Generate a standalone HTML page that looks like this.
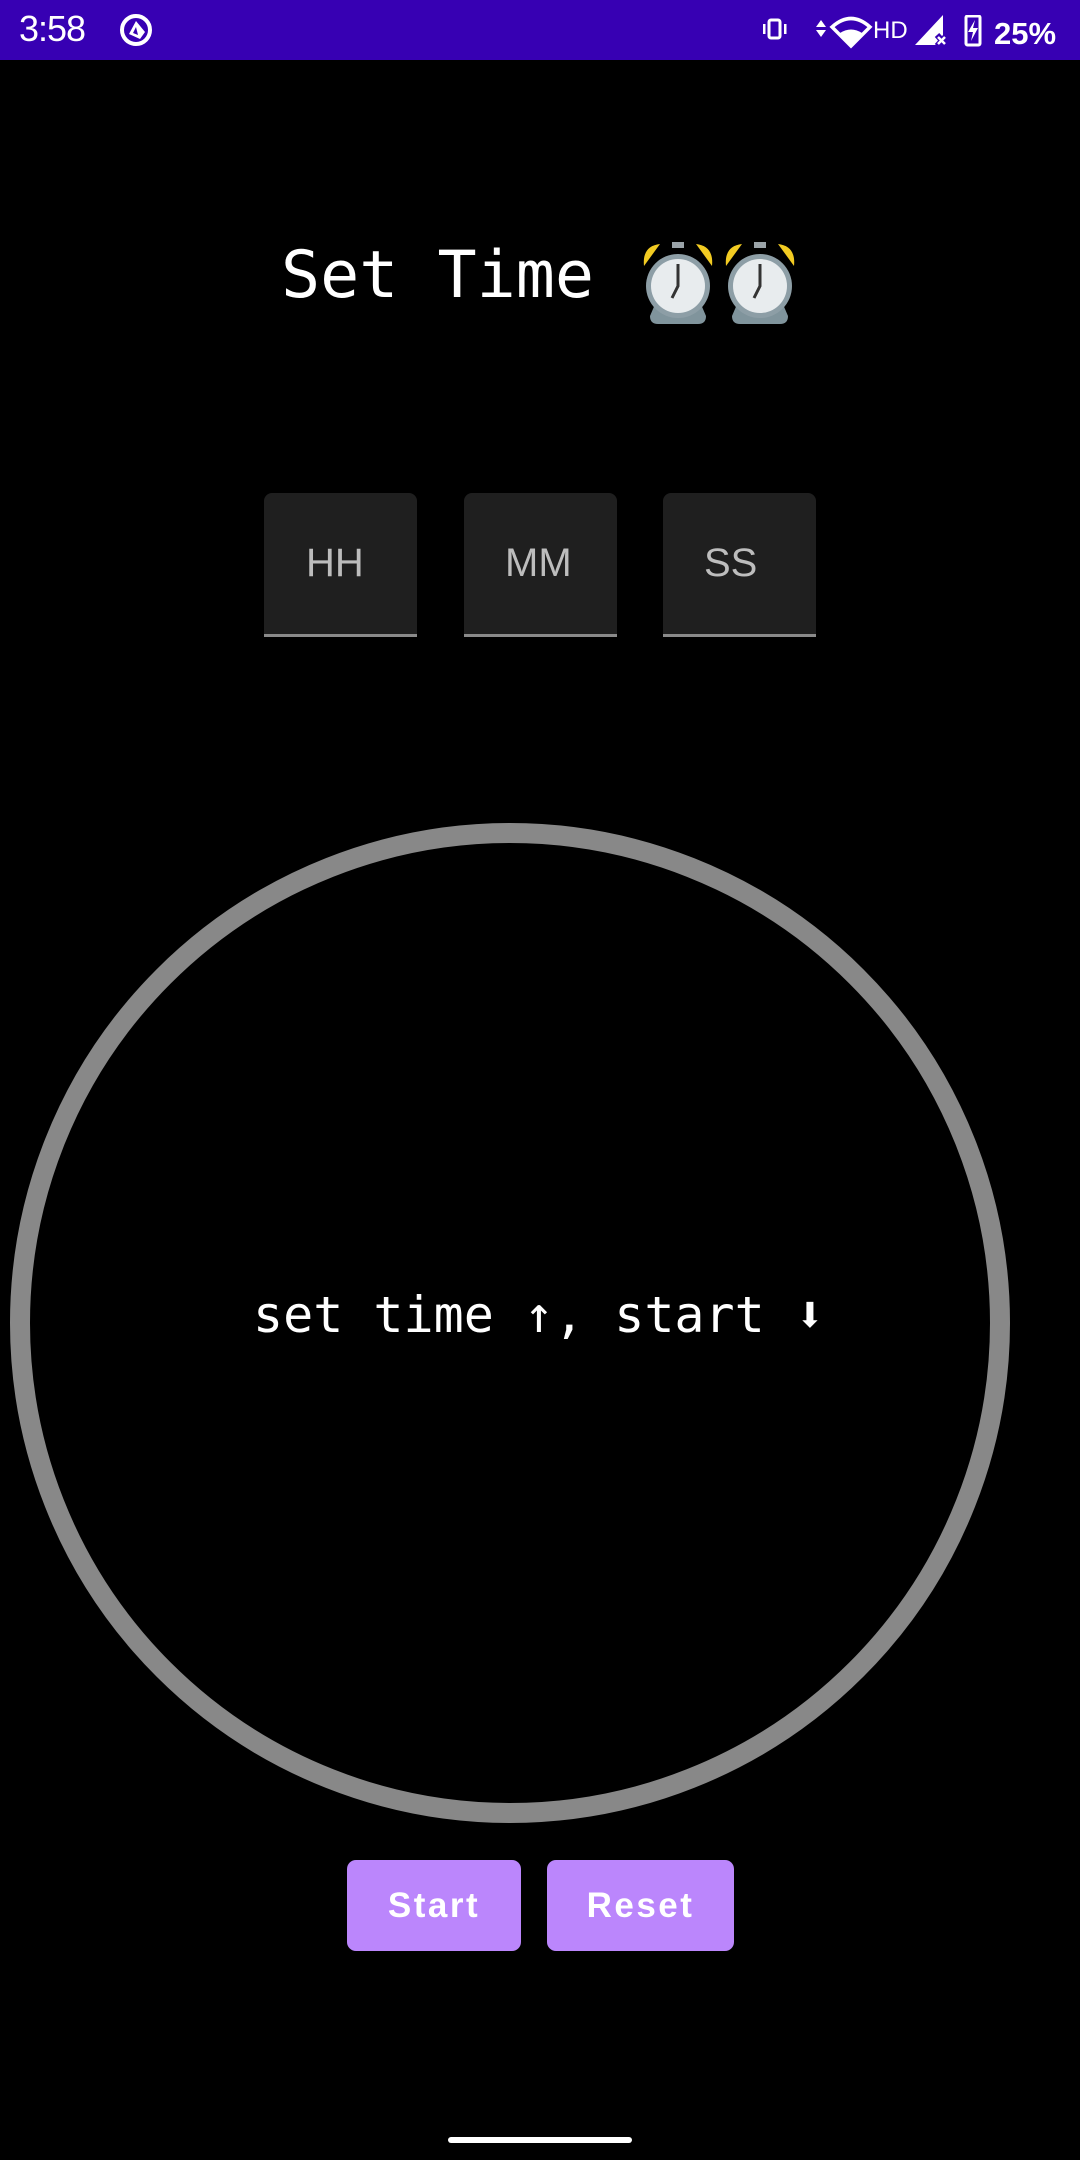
<!DOCTYPE html>
<html><head><meta charset="utf-8"><style>
html,body{margin:0;padding:0;background:#000;width:1080px;height:2160px;overflow:hidden;position:relative;font-family:"Liberation Sans",sans-serif}
.sb{position:absolute;left:0;top:0;width:1080px;height:60px;background:#3700b3;color:#fff}
.abs{position:absolute}
.box{position:absolute;top:493px;width:153px;height:141px;background:#1f1f1f;border-radius:8px 8px 0 0;border-bottom:3px solid #8a8a8a;color:#bdbdbd;font-size:40px;line-height:141px}
.btn{position:absolute;top:1860px;height:91px;background:#bb86fc;border-radius:9px;color:#fff;font-weight:bold;font-size:35px;letter-spacing:2.5px;text-align:center;line-height:91px}
</style></head><body>
<div class="sb">
 <div class="abs" style="left:19px;top:8px;font-size:36px;letter-spacing:-1px">3:58</div>
 <svg class="abs" style="left:118px;top:12px" width="36" height="36" viewBox="0 0 36 36"><circle cx="18" cy="18" r="14" fill="none" stroke="#fff" stroke-width="4"/><path d="M18 9 L11 22 L22 27 L27 20 Z" fill="#fff"/><path d="M18 15 L15 21 L20 23Z" fill="#3700b3"/></svg>
 <svg class="abs" style="left:760px;top:15px" width="300" height="34" viewBox="760 15 300 34">
  <rect x="769" y="20" width="11" height="18" rx="2" fill="none" stroke="#fff" stroke-width="3"/>
  <rect x="763" y="24" width="2.5" height="10" fill="#fff"/><rect x="784" y="24" width="2.5" height="10" fill="#fff"/>
  <path d="M821 20 L826 27 L816 27Z M816 30 L826 30 L821 37Z" fill="#fff"/>
  <path d="M832 27 Q851 10 870 27 L851 46Z" fill="none" stroke="#fff" stroke-width="3.5"/>
  <path d="M840 33 Q851 26 862 33 L851 44Z" fill="#fff"/>
  <text x="873" y="38" font-size="24" fill="#fff" font-family="Liberation Sans Narrow,Liberation Sans">HD</text>
  <path d="M915 45 L943 15 L943 45Z" fill="#fff"/><path d="M937 35 L947 46 M947 35 L937 46" stroke="#3700b3" stroke-width="6"/><path d="M938 37 L945 44 M945 37 L938 44" stroke="#fff" stroke-width="2.5"/>
  <rect x="966" y="16" width="14" height="29" rx="1.5" fill="none" stroke="#fff" stroke-width="3"/><rect x="970" y="13" width="6" height="3" fill="#fff"/>
  <path d="M975 20 L968 32 L973 32 L971 41 L978 28 L973 28Z" fill="#fff"/>
  <text x="994" y="44" font-size="31" fill="#fff" font-weight="bold" font-family="Liberation Sans">25%</text>
 </svg>
</div>

<div class="abs" style="left:281px;top:226px;font-family:'DejaVu Sans Mono','Liberation Mono',monospace;font-size:65px;color:#fff;line-height:100px;white-space:pre">Set Time</div>
<svg class="abs" style="left:640px;top:238px" width="165" height="90" viewBox="0 0 165 90">
 <g id="c">
  <path d="M4 28 Q2 8 20 6 Z" fill="#f2cb22"/><path d="M72 28 Q74 8 56 6 Z" fill="#f2cb22"/>
  <rect x="32" y="4" width="12" height="6" fill="#9aa3a8"/>
  <path d="M10 78 L16 64 L60 64 L66 78 Q66 86 58 86 L18 86 Q10 86 10 78Z" fill="#80949c"/>
  <circle cx="38" cy="48" r="32" fill="#8d9ea6"/><circle cx="38" cy="48" r="27" fill="#e8ecee"/>
  <path d="M38 26 V48 L32 60" stroke="#333" stroke-width="3" fill="none"/>
 </g>
 <use href="#c" x="82"/>
</svg>

<div class="box" style="left:264px"><span style="margin-left:42px">HH</span></div>
<div class="box" style="left:464px"><span style="margin-left:41px">MM</span></div>
<div class="box" style="left:663px"><span style="margin-left:41px">SS</span></div>

<svg class="abs" style="left:0;top:0" width="1080" height="2160"><circle cx="510" cy="1323" r="490" fill="none" stroke="#888" stroke-width="20"/></svg>
<div class="abs" style="left:253px;top:1280px;font-family:'DejaVu Sans Mono','Liberation Mono',monospace;font-size:50px;color:#fff;line-height:70px;white-space:pre">set time ↑, start ⬇</div>

<div class="btn" style="left:347px;width:174px">Start</div>
<div class="btn" style="left:547px;width:187px">Reset</div>

<div class="abs" style="left:448px;top:2137px;width:184px;height:6px;border-radius:3px;background:#fff"></div>
</body></html>
